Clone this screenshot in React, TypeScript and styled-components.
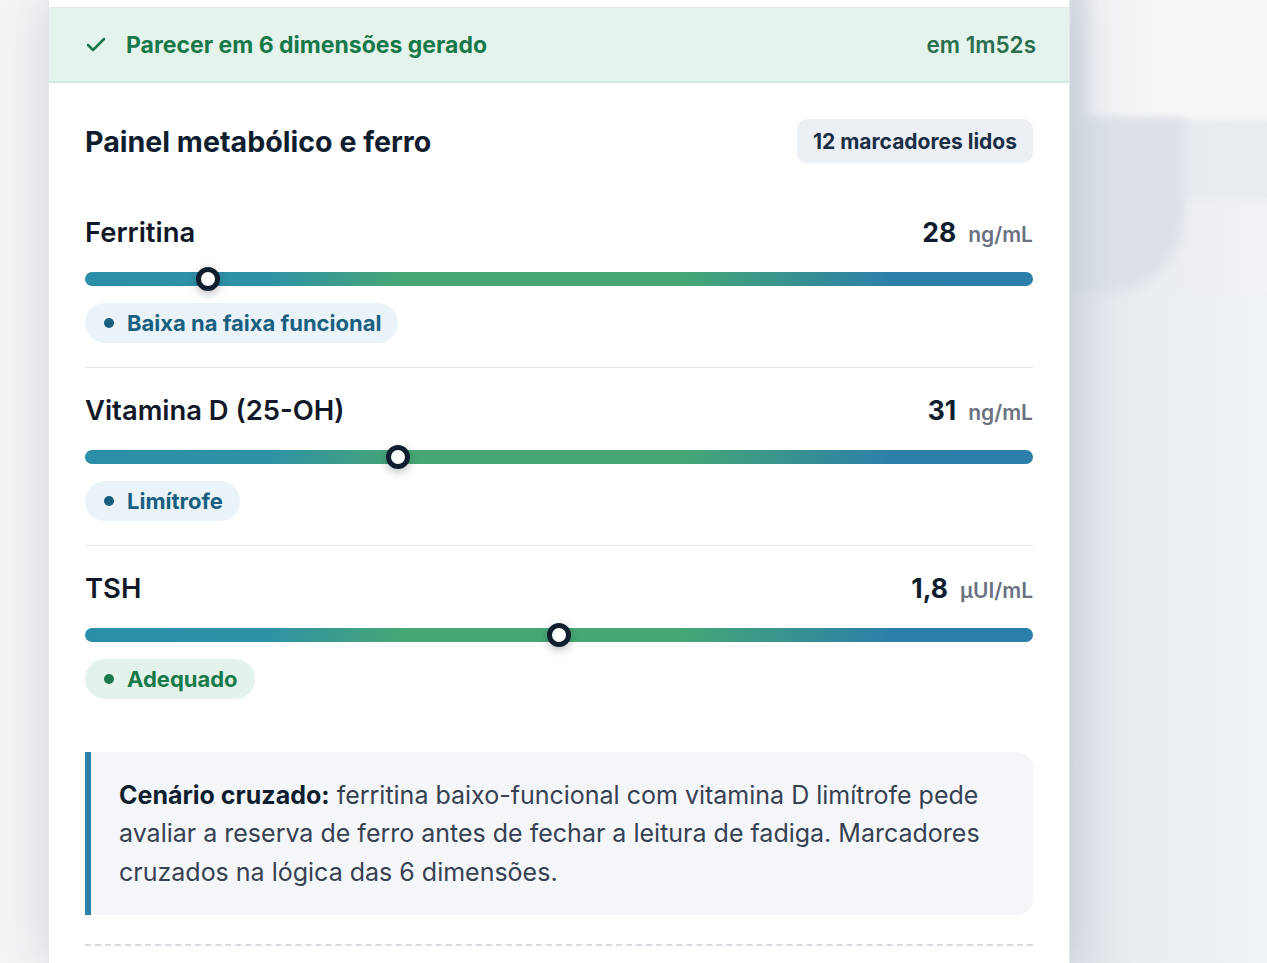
import React from 'react';
import styled, { createGlobalStyle } from 'styled-components';
import { Check } from 'lucide-react';

const GlobalStyle = createGlobalStyle`
   html, body {
      margin: 0;
      padding: 0;
      height: 100%;
   }
   body {
      background: linear-gradient(90deg, #f3f4f6 0%, #eef0f3 60%, #f2f4f7 100%);
      font-family: Inter, 'Noto Sans', 'Liberation Sans', sans-serif;
      overflow: hidden;
   }
   * {
      box-sizing: border-box;
   }
`;

const Page = styled.div`
   position: relative;
   min-height: 100vh;
   padding-left: 48px;
   display: flex;
   align-items: flex-start;
`;

// soft, out-of-focus panels behind the card
const Backdrop = styled.div`
   position: absolute;
   inset: 0;
   z-index: 0;
   pointer-events: none;
   background: linear-gradient(90deg, transparent 1060px, #dde2e8 1072px, #e9ecf0 1160px, #f1f3f6 100%);
`;

const GhostTop = styled.div`
   position: absolute;
   left: 1090px;
   right: -40px;
   top: -40px;
   height: 160px;
   background: linear-gradient(90deg, #eef0f3 0%, #f6f7f9 40%, #f7f8fa 100%);
   filter: blur(6px);
`;

const GhostBand = styled.div`
   position: absolute;
   left: 1070px;
   right: -40px;
   top: 121px;
   height: 80px;
   background: linear-gradient(90deg, #dfe4ea 0%, #e7ebf0 30%, #e9edf1 100%);
   filter: blur(2px);
`;

const GhostTail = styled.div`
   position: absolute;
   left: 1066px;
   top: 118px;
   width: 118px;
   height: 174px;
   background: #dce1e8;
   border-bottom-right-radius: 80px;
   filter: blur(4px);
`;

const GhostLower = styled.div`
   position: absolute;
   left: 1070px;
   right: 0;
   top: 292px;
   bottom: 0;
   background: linear-gradient(90deg, #dfe3e8 0%, #e9ecf0 35%, #f0f3f6 100%);
`;

const Card = styled.div`
   position: relative;
   z-index: 1;
   width: 1022px;
   padding-top: 7px;
   background: #fff;
   border-left: 1px solid #e3e6eb;
   border-right: 1px solid #e3e6eb;
   box-shadow: 0 0 48px rgba(30, 50, 80, 0.16);
   min-height: 100vh;
`;

const Banner = styled.div`
   height: 76px;
   display: flex;
   align-items: center;
   padding: 0 33px 0 35px;
   background: #e4f3ec;
   border-top: 1px solid #e4e7ec;
   border-bottom: 2px solid #d0eadf;
`;

const BannerTitle = styled.span`
   margin-left: 18px;
   font-size: 23px;
   font-weight: 700;
   color: #17784a;
`;

const BannerTime = styled.span`
   margin-left: auto;
   font-size: 22.5px;
   font-weight: 600;
   color: #2b6e4f;
`;

const Body = styled.div`
   padding: 36px 36px 0 36px;
`;

const Header = styled.div`
   display: flex;
   align-items: center;
   justify-content: space-between;
   height: 44px;
`;

const Title = styled.h2`
   margin: 0;
   font-size: 28.6px;
   font-weight: 700;
   color: #0f1e2e;
`;

const CountBadge = styled.span`
   height: 44px;
   display: inline-flex;
   align-items: center;
   padding: 0 16px;
   border-radius: 10px;
   background: #eceff4;
   color: #1b2e44;
   font-size: 21px;
   font-weight: 700;
`;

const List = styled.div`
   margin-top: 27px;
`;

const Row = styled.div`
   padding: 26px 0 24px;
   & + & {
      border-top: 1px solid #e6e8ec;
   }
`;

const RowHead = styled.div`
   display: flex;
   align-items: baseline;
   justify-content: space-between;
   height: 32px;
   line-height: 32px;
`;

const Name = styled.span`
   font-size: 27.4px;
   font-weight: 600;
   color: #111827;
`;

const Value = styled.span`
   font-size: 26.5px;
   font-weight: 700;
   color: #0f1e2e;
`;

const Unit = styled.span`
   margin-left: 12px;
   font-size: 21px;
   font-weight: 600;
   color: #6b7280;
`;

const TrackArea = styled.div`
   position: relative;
   margin-top: 19px;
   height: 24px;
   display: flex;
   align-items: center;
`;

const Track = styled.div`
   width: 100%;
   height: 14px;
   border-radius: 7px;
   background: linear-gradient(
      90deg,
      #2c8fa9 0%,
      #2e91a7 19%,
      #47a873 34%,
      #47a873 62%,
      #2b80aa 85%,
      #2a7fab 100%
   );
`;

const Thumb = styled.span`
   position: absolute;
   top: 50%;
   width: 24px;
   height: 24px;
   border-radius: 50%;
   background: #fff;
   border: 5px solid #0f1e2e;
   transform: translate(-50%, -50%);
   box-shadow: 0 3px 8px rgba(15, 30, 46, 0.28);
`;

const Pill = styled.span<{ $tone: 'blue' | 'green' }>`
   margin-top: 12px;
   height: 40px;
   display: inline-flex;
   align-items: center;
   gap: 13px;
   padding: 0 17px 0 19px;
   border-radius: 20px;
   font-size: 22px;
   font-weight: 700;
   background: ${(p) => (p.$tone === 'green' ? '#e3f3eb' : '#e9f3f8')};
   color: ${(p) => (p.$tone === 'green' ? '#187a4b' : '#185f80')};
   &::before {
      content: '';
      width: 10px;
      height: 10px;
      border-radius: 50%;
      background: currentColor;
   }
`;

const Callout = styled.div`
   margin-top: 29px;
   padding: 24px 28px 24px 28px;
   border-left: 6px solid #2a84a9;
   border-radius: 0 16px 16px 0;
   background: #f4f6fa;
   font-size: 25px;
   line-height: 38.4px;
   color: #374151;
   strong {
      color: #0f1e2e;
      font-weight: 700;
   }
`;

const Dashed = styled.div`
   margin-top: 29px;
   border-top: 2px dashed #d6d9e0;
`;

interface IMarker {
   name: string;
   value: string;
   unit: string;
   position: number;
   status: string;
   tone: 'blue' | 'green';
}

const markers: IMarker[] = [
   { name: 'Ferritina', value: '28', unit: 'ng/mL', position: 13, status: 'Baixa na faixa funcional', tone: 'blue' },
   { name: 'Vitamina D (25-OH)', value: '31', unit: 'ng/mL', position: 33, status: 'Limítrofe', tone: 'blue' },
   { name: 'TSH', value: '1,8', unit: 'µUI/mL', position: 50, status: 'Adequado', tone: 'green' },
];

const App: React.FC = () => {
   return (
      <>
         <GlobalStyle />
         <Page>
            <Backdrop>
               <GhostTop />
               <GhostLower />
               <GhostBand />
               <GhostTail />
            </Backdrop>
            <Card>
               <Banner>
                  <Check size={24} strokeWidth={2.5} color="#17784a" />
                  <BannerTitle>Parecer em 6 dimensões gerado</BannerTitle>
                  <BannerTime>em 1m52s</BannerTime>
               </Banner>
               <Body>
                  <Header>
                     <Title>Painel metabólico e ferro</Title>
                     <CountBadge>12 marcadores lidos</CountBadge>
                  </Header>
                  <List>
                     {markers.map((m) => (
                        <Row key={m.name}>
                           <RowHead>
                              <Name>{m.name}</Name>
                              <span>
                                 <Value>{m.value}</Value>
                                 <Unit>{m.unit}</Unit>
                              </span>
                           </RowHead>
                           <TrackArea>
                              <Track />
                              <Thumb style={{ left: `${m.position}%` }} />
                           </TrackArea>
                           <Pill $tone={m.tone}>{m.status}</Pill>
                        </Row>
                     ))}
                  </List>
                  <Callout>
                     <strong>Cenário cruzado:</strong> ferritina baixo-funcional com vitamina D limítrofe pede
                     avaliar a reserva de ferro antes de fechar a leitura de fadiga. Marcadores cruzados na
                     lógica das 6 dimensões.
                  </Callout>
                  <Dashed />
               </Body>
            </Card>
         </Page>
      </>
   );
};

export default App;
